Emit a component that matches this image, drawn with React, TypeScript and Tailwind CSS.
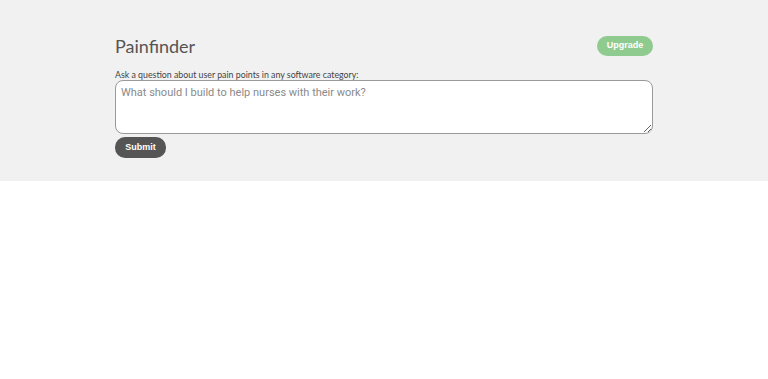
export default function App() {
  return (
    <div className="w-full min-h-screen bg-white">
      <div className="bg-[#f1f1f1] h-[181px] w-full">
        <div className="w-[538px] mx-auto pt-[36px]">
          <div className="flex items-start justify-between">
            <h1 className="text-[18px] leading-[20px] text-[#555] font-['Lato',sans-serif]">Painfinder</h1>
            <button className="block h-[20px] w-[56px] rounded-[10px] bg-[#8fca8f] text-white text-[9px] font-bold font-['Liberation_Sans',sans-serif]">Upgrade</button>
          </div>
          <div className="mt-[13px] text-[8.8px] leading-[11px] text-[#444] font-['Lato',sans-serif]">Ask a question about user pain points in any software category:</div>
          <textarea
            className="block mt-0 w-[538px] h-[54px] rounded-[8px] border border-[#9a9a9a] bg-white px-[5px] pt-[5px] pb-[4px] text-[11px] leading-[13px] font-['Roboto',sans-serif] placeholder:text-[#8a8a8a] outline-none"
            placeholder="What should I build to help nurses with their work?"
          />
          <button className="block mt-[3px] h-[21px] w-[51px] rounded-[10px] bg-[#555] text-white text-[9px] font-bold font-['Liberation_Sans',sans-serif]">Submit</button>
        </div>
      </div>
    </div>
  );
}
